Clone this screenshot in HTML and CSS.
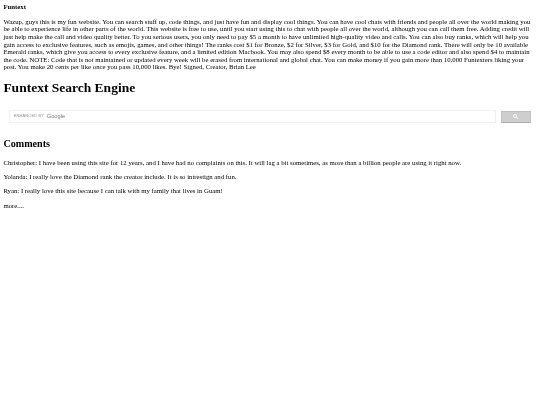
FILE: index.html
```html
<!DOCTYPE html>
<html lang="en">
<head>
<meta charset="utf-8">
<title>Funtext</title>
<link rel="stylesheet" href="styles.css">
</head>
<body>
<main class="page">
<b class="brand">Funtext</b>
<p class="intro">Wazup, guys this is my fun website. You can search stuff up, code things, and just have fun and display cool things. You can have cool chats with friends and people all over the world making you be able to experience life in other parts of the world. This website is free to use, until you start using this to chat with people all over the world, although you can call them free. Adding credit will just help make the call and video quality better. To you serious users, you only need to pay $5 a month to have unlimited high-quality video and calls. You can also buy ranks, which will help you gain access to exclusive features, such as emojis, games, and other things! The ranks cost $1 for Bronze, $2 for Silver, $3 for Gold, and $10 for the Diamond rank. There will only be 10 available Emerald ranks, which give you access to every exclusive feature, and a limited edition Macbook. You may also spend $8 every month to be able to use a code editor and also spend $4 to maintain the code. NOTE: Code that is not maintained or updated every week will be erased from international and global chat. You can make money if you gain more than 10,000 Funtexters liking your post. You make 20 cents per like once you pass 10,000 likes. Bye! Signed, Creator, Brian Lee</p>
<h1 class="title">Funtext Search Engine</h1>
<form class="search">
  <div class="search-box"><span class="enhanced">ENHANCED BY</span><span class="google">Google</span></div>
  <button class="search-btn" type="button" aria-label="search">
    <svg class="search-icon" viewBox="0 0 13 13"><circle cx="5" cy="5" r="3.6" fill="none" stroke="#fff" stroke-width="2"/><path d="M8 8l4 4" stroke="#fff" stroke-width="2.2"/></svg>
  </button>
</form>
<h2 class="heading">Comments</h2>
<p class="comment">Christopher: I have been using this site for 12 years, and I have had no complaints on this. It will lag a bit sometimes, as more than a billion people are using it right now.</p>
<p class="comment">Yolanda: I really love the Diamond rank the creator include. It is so intrestign and fun.</p>
<p class="comment">Ryan: I really love this site because I can talk with my family that lives in Guam!</p>
<p class="comment">more....</p>
</main>
</body>
</html>
```
FILE: styles.css
```css
html, body { margin: 0; background: #fff; }
body { overflow: hidden; }
.page {
  box-sizing: border-box;
  width: 1280px;
  height: 960px;
  padding: 8px;
  font-family: "Liberation Serif", "Times New Roman", serif;
  font-size: 16px;
  line-height: 18px;
  color: #000;
  zoom: 0.421875;
  filter: blur(0.8px);
}
.brand { display: block; }
.intro { margin: 16px 0 0; }
.comment { margin: 16px 0; }
.title {
  margin: 21.44px 0;
  font-size: 32px;
  line-height: 37px;
  font-weight: bold;
}
.search {
  display: flex;
  align-items: flex-start;
  gap: 13px;
  margin: 0 14px 0 14px;
  padding-top: 14px;
}
.search-box {
  flex: 1;
  box-sizing: border-box;
  height: 29px;
  border: 2px solid #f0f0f0;
  padding-left: 8px;
  display: flex;
  align-items: center;
  gap: 6px;
  background: #fff;
}
.enhanced {
  font-family: "Liberation Sans", Arial, sans-serif;
  font-size: 9px;
  letter-spacing: 0.7px;
  color: #888;
}
.google {
  font-family: "Liberation Sans", Arial, sans-serif;
  font-size: 13.5px;
  color: #777;
}
.search-btn {
  width: 70px;
  height: 28px;
  margin-top: 1px;
  padding: 0;
  border: 2px solid #c0c0c0;
  border-bottom-color: #b0b0b0;
  border-radius: 2px;
  background: #cecece;
  display: flex;
  align-items: center;
  justify-content: center;
}
.search-icon { width: 13px; height: 13px; display: block; }
.heading {
  margin: 37px 0 0;
  font-size: 24px;
  line-height: 27px;
  font-weight: bold;
}
.heading + .comment { margin-top: 21px; }
```
